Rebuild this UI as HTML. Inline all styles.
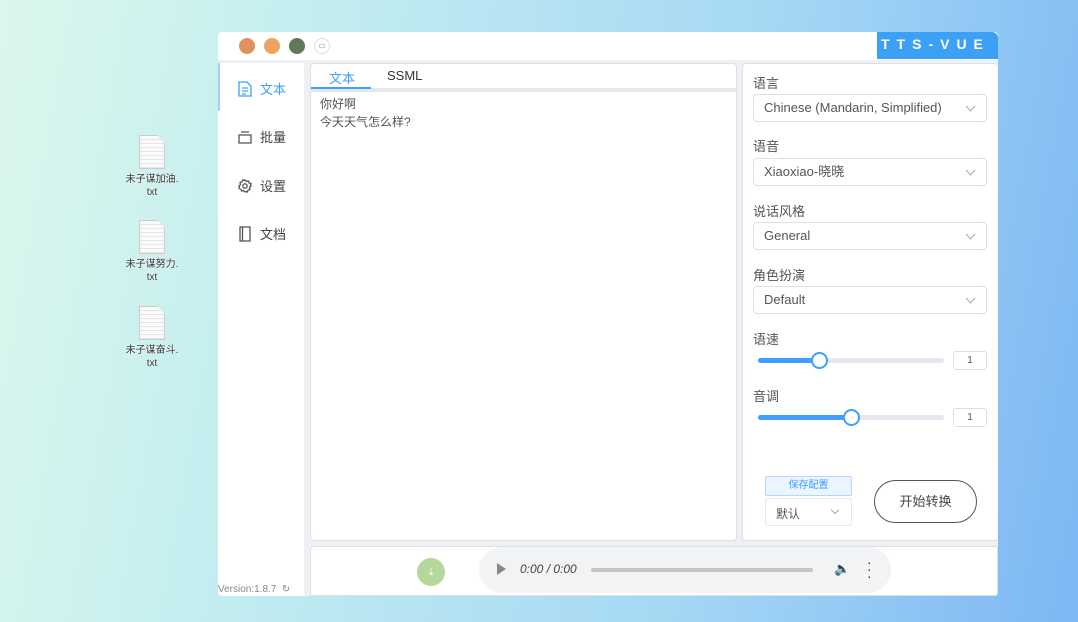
<!DOCTYPE html><html><head><meta charset="utf-8"><style>
*{box-sizing:border-box;margin:0;padding:0}
body{width:1078px;height:622px;overflow:hidden;position:relative;font-family:"Liberation Sans","Noto Sans CJK SC",sans-serif;background:linear-gradient(100deg,#dcf7ec 0%,#c4eef0 25%,#a6d8f4 65%,#7db7f4 100%)}
.abs{position:absolute}
.icon{position:absolute;left:124px;width:56px;text-align:center;font-size:10px;color:#333;text-shadow:0 0 2px #fff,0 0 1px #fff;line-height:13px}
.doc{width:26px;height:34px;margin:0 auto 4px;background:repeating-linear-gradient(#fafafa 0 3px,#e6e6e6 3px 4px);border:1px solid #ccc;clip-path:polygon(0 0,70% 0,100% 25%,100% 100%,0 100%)}
.win{left:218px;top:32px;width:780px;height:564px;background:#eef0f3;border-radius:4px;overflow:hidden}
.dot{position:absolute;top:6px;width:16px;height:16px;border-radius:50%}
.side{left:0;top:31px;width:86px;height:533px;background:#fff}
.nav{position:absolute;left:20px;font-size:13px;color:#444;display:flex;align-items:center;gap:8px}
.panel{background:#fff;border:1px solid #dcdfe6;border-radius:4px}
.lbl{position:absolute;left:10px;font-size:13px;color:#555}
.sel{position:absolute;left:10px;width:234px;height:28px;border:1px solid #dcdfe6;border-radius:4px;font-size:13px;color:#555;padding:0 10px;line-height:26px}
.sel:after{content:"";position:absolute;right:12px;top:8px;width:6px;height:6px;border-right:1px solid #aaa;border-bottom:1px solid #aaa;transform:rotate(45deg)}
.track{position:absolute;left:15px;width:186px;height:5px;background:#e4e7ed;border-radius:3px}
.fill{height:5px;background:#409eff;border-radius:3px}
.knob{position:absolute;top:-6px;width:17px;height:17px;border:2px solid #409eff;background:#fff;border-radius:50%}
.num{position:absolute;left:210px;width:34px;height:19px;border:1px solid #dcdfe6;border-radius:3px;font-size:10px;text-align:center;line-height:17px;color:#555}
</style></head><body>
<div class="icon" style="top:135px"><div class="doc"></div>未子谋加油.<br>txt</div>
<div class="icon" style="top:220px"><div class="doc"></div>未子谋努力.<br>txt</div>
<div class="icon" style="top:306px"><div class="doc"></div>未子谋奋斗.<br>txt</div>
<div class="abs win">
 <div class="abs" style="left:0;top:0;width:780px;height:28px;background:#fff"></div>
 <div class="dot" style="left:21px;background:#df915f"></div>
 <div class="dot" style="left:46px;background:#eca55e"></div>
 <div class="dot" style="left:71px;background:#62785a"></div>
 <div class="abs" style="left:96px;top:6px;width:16px;height:16px;border:1px solid #ddd;border-radius:50%;font-size:8px;text-align:center;line-height:14px;color:#888">▭</div>
 <div class="abs" style="left:659px;top:0;width:121px;height:27px;background:#3ca0f5;color:#fff;font-weight:bold;font-size:14px;letter-spacing:7px;padding:4px 0 0 4px;white-space:nowrap;border-top-right-radius:6px">TTS-VUE</div>
 <div class="abs side">
  <div class="abs" style="left:0;top:0;width:2px;height:48px;background:#a7cdf5"></div>
  <div class="nav" style="top:16px;color:#409eff"><svg width="14" height="16" viewBox="0 0 14 16" fill="none" stroke="#409eff" stroke-width="1.3"><path d="M1 1h8l4 4v10H1z M4 7h6 M4 10h6 M4 13h4"/></svg> 文本</div>
  <div class="nav" style="top:64px"><svg width="14" height="14" viewBox="0 0 14 14" fill="none" stroke="#555" stroke-width="1.3"><path d="M3 2h8M1 5h12v8H1z"/></svg> 批量</div>
  <div class="nav" style="top:113px"><svg width="14" height="14" viewBox="0 0 14 14" fill="none" stroke="#555" stroke-width="1.3"><circle cx="7" cy="7" r="2.2"/><path d="M7 1l1.5 1.5 2-.5.5 2 2 .5-.5 2L13 7l-1.5 1.5.5 2-2 .5-.5 2-2-.5L7 13l-1.5-1.5-2 .5-.5-2-2-.5.5-2L1 7l1.5-1.5-.5-2 2-.5.5-2 2 .5z"/></svg> 设置</div>
  <div class="nav" style="top:161px"><svg width="14" height="16" viewBox="0 0 14 16" fill="none" stroke="#555" stroke-width="1.3"><path d="M2 1h10v14H2z M4.5 1v14"/></svg> 文档</div>
  <div class="abs" style="left:0;top:521px;font-size:10px;color:#888">Version:1.8.7 &nbsp;↻</div>
 </div>
 <div class="abs panel" style="left:92px;top:31px;width:427px;height:478px">
  <div class="abs" style="left:0;top:0;width:425px;height:25px;border-bottom:1px solid #e4e7ed"></div>
  <div class="abs" style="left:18px;top:4px;font-size:13px;color:#409eff">文本</div>
  <div class="abs" style="left:0;top:23px;width:60px;height:2px;background:#409eff"></div>
  <div class="abs" style="left:76px;top:4px;font-size:13px;color:#333">SSML</div>
  <div class="abs" style="left:0;top:25px;width:425px;height:3px;background:#e4e7ed"></div>
  <div class="abs" style="left:9px;top:31px;font-size:12px;color:#555;line-height:18px">你好啊<br>今天天气怎么样?</div>
 </div>
 <div class="abs panel" style="left:524px;top:31px;width:256px;height:478px;border-right:none">
  <div class="lbl" style="top:9px">语言</div>
  <div class="sel" style="top:30px">Chinese (Mandarin, Simplified)</div>
  <div class="lbl" style="top:72px">语音</div>
  <div class="sel" style="top:94px">Xiaoxiao-晓晓</div>
  <div class="lbl" style="top:137px">说话风格</div>
  <div class="sel" style="top:158px">General</div>
  <div class="lbl" style="top:201px">角色扮演</div>
  <div class="sel" style="top:222px">Default</div>
  <div class="lbl" style="top:265px">语速</div>
  <div class="track" style="top:294px"><div class="fill" style="width:62px"></div><div class="knob" style="left:53px"></div></div>
  <div class="num" style="top:287px">1</div>
  <div class="lbl" style="top:322px">音调</div>
  <div class="track" style="top:351px"><div class="fill" style="width:94px"></div><div class="knob" style="left:85px"></div></div>
  <div class="num" style="top:344px">1</div>
  <div class="abs" style="left:22px;top:412px;width:87px;height:20px;background:#ecf5ff;border:1px solid #b3d8ff;border-radius:2px;font-size:10px;color:#409eff;text-align:center;line-height:18px">保存配置</div>
  <div class="abs" style="left:22px;top:434px;width:87px;height:28px;border:1px solid #e4e7ed;border-radius:3px;font-size:12px;color:#555;padding:6px 10px">默认<span style="position:absolute;right:13px;top:8px;width:6px;height:6px;border-right:1px solid #aaa;border-bottom:1px solid #aaa;transform:rotate(45deg)"></span></div>
  <div class="abs" style="left:131px;top:416px;width:103px;height:43px;border:1px solid #555;border-radius:22px;font-size:13px;color:#444;text-align:center;line-height:41px">开始转换</div>
 </div>
 <div class="abs" style="left:92px;top:514px;width:688px;height:50px;background:#fff;border:1px solid #dcdfe6;border-radius:4px 0 0 0">
  <div class="abs" style="left:106px;top:11px;width:28px;height:28px;border-radius:50%;background:#b5d89a;color:#fff;font-size:11px;text-align:center;line-height:28px">⤓</div>
  <div class="abs" style="left:168px;top:0;width:412px;height:46px;background:#f1f3f4;border-radius:23px">
   <div class="abs" style="left:18px;top:16px;width:0;height:0;border-left:9px solid #888;border-top:6px solid transparent;border-bottom:6px solid transparent"></div>
   <div class="abs" style="left:41px;top:15px;font-size:12px;font-style:italic;color:#444">0:00 / 0:00</div>
   <div class="abs" style="left:112px;top:21px;width:222px;height:4px;background:#c4c7c5;border-radius:2px"></div>
   <div class="abs" style="left:355px;top:14px;font-size:13px;color:#999">🔈</div>
   <div class="abs" style="left:388px;top:12px;font-size:14px;color:#333;line-height:7px">·<br>·<br>·</div>
  </div>
 </div>
</div>
</body></html>
